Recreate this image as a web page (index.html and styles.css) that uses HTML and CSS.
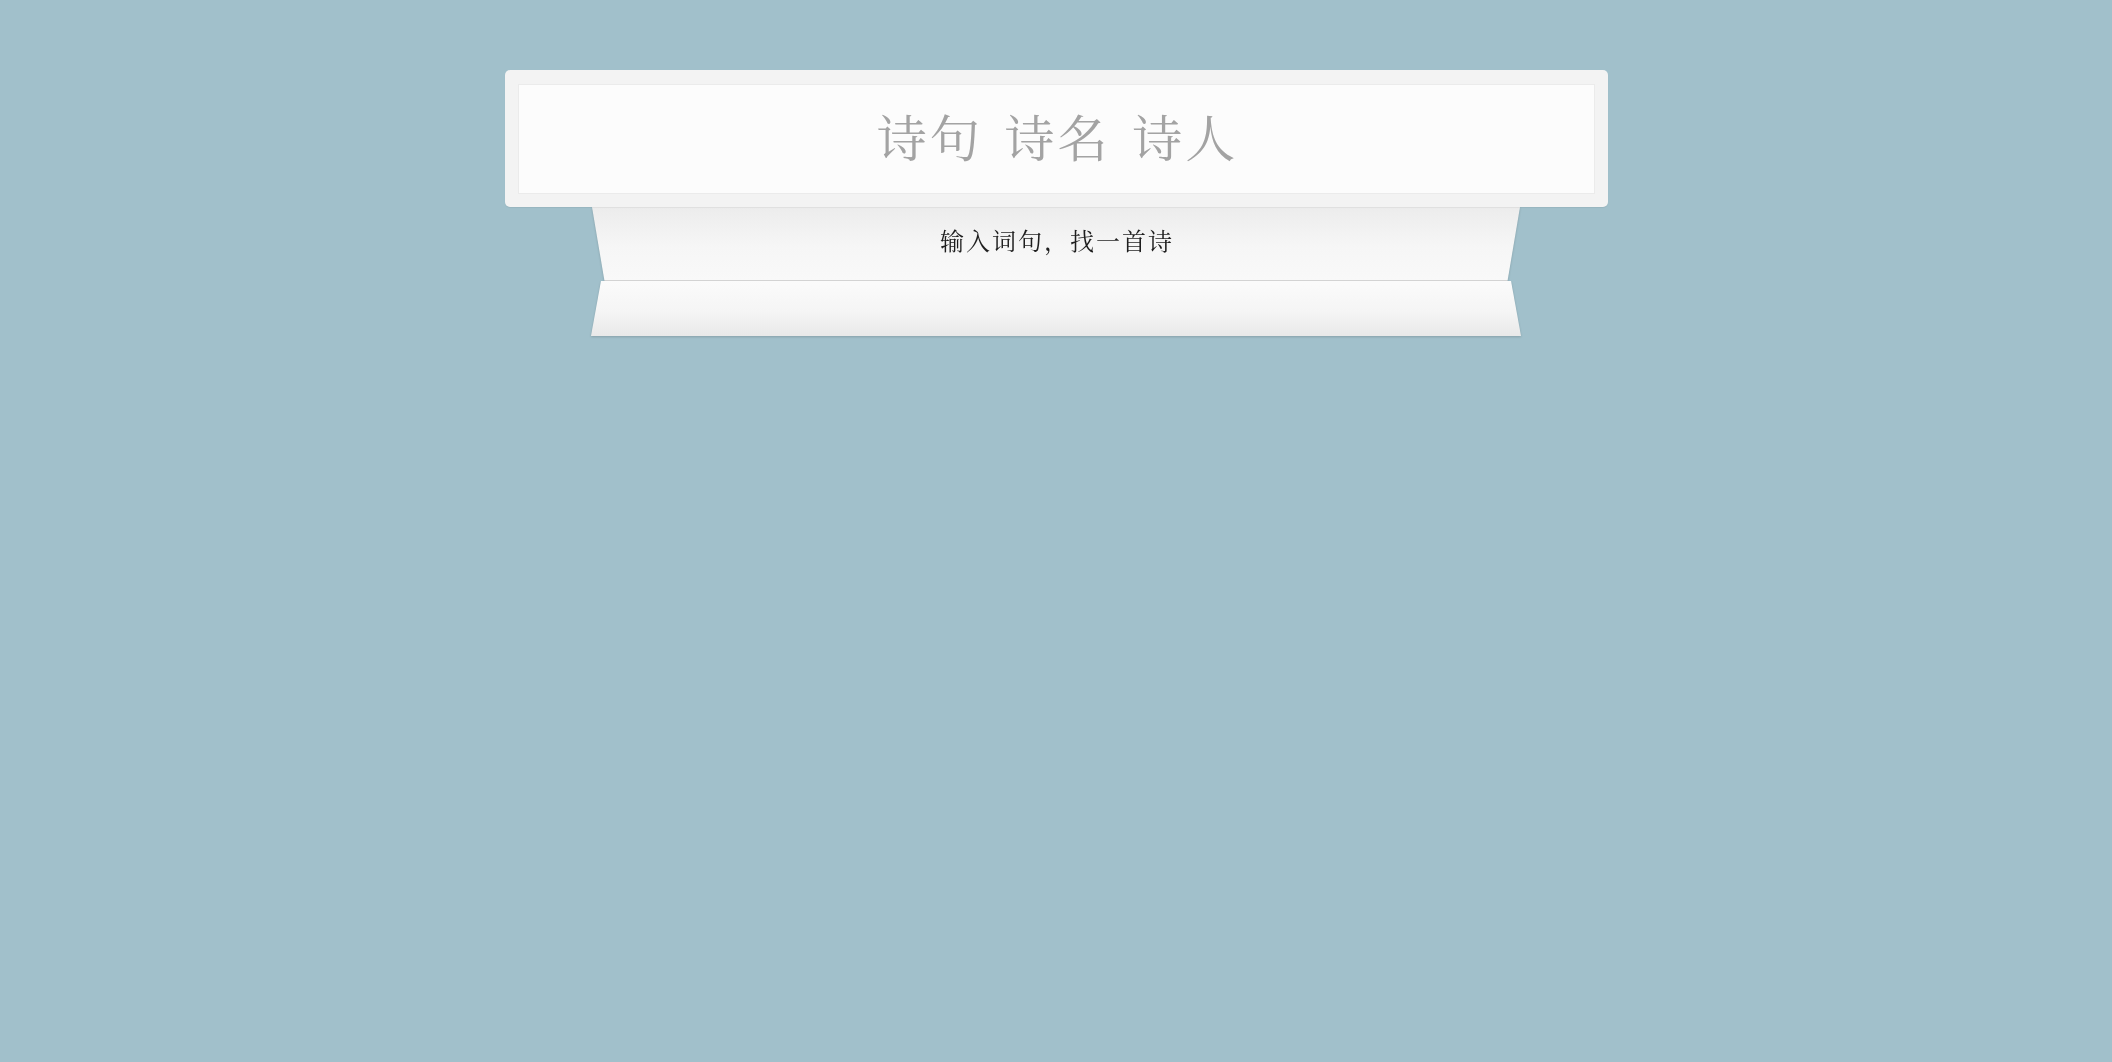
FILE: index.html
```html
<!DOCTYPE html>
<html lang="zh-CN">
<head>
<meta charset="utf-8">
<title>诗句 诗名 诗人</title>
<link rel="stylesheet" href="styles.css">
</head>
<body>
  <div class="wrap">
    <header class="card">
      <div class="inner">
        <h1 class="title">诗句 诗名 诗人</h1>
      </div>
    </header>
    <div class="tabs">
      <div class="tab-top">
        <p class="subtitle">输入词句，找一首诗</p>
      </div>
      <div class="tab-bottom"></div>
    </div>
  </div>
</body>
</html>
```

FILE: styles.css
```css
html, body {
  margin: 0;
  padding: 0;
}
body {
  background: #a1c0cb;
  min-height: 1062px;
  font-family: "KaiTi", "STKaiti", "AR PL UKai CN", "Noto Serif CJK SC", "Noto Sans CJK SC", sans-serif;
}
.wrap {
  width: 1103px;
  margin: 70px auto 0;
}
.card {
  background: #f3f3f3;
  border-radius: 5px;
  padding: 14px 13px 13px;
  box-shadow: 0 1px 1px rgba(0, 0, 0, 0.06);
  position: relative;
  z-index: 2;
}
.inner {
  height: 110px;
  box-sizing: border-box;
  background: #fcfcfc;
  border: 1px solid #ebebeb;
  display: flex;
  align-items: center;
  justify-content: center;
}
.title {
  margin: 0;
  font-size: 50px;
  font-weight: 400;
  line-height: 1;
  color: #a3a3a3;
  letter-spacing: 3px;
  word-spacing: 6px;
  padding-left: 3px;
  padding-bottom: 9px;
}
.tabs {
  display: flex;
  flex-direction: column;
  align-items: center;
  filter: drop-shadow(0 1px 1px rgba(0, 0, 0, 0.16));
}
.tab-top {
  width: 928px;
  height: 74px;
  box-sizing: border-box;
  background: linear-gradient(to bottom, #ececec 0%, #f6f6f6 55%, #f9f9f9 100%);
  border-bottom: 1px solid #d3d3d3;
  clip-path: polygon(0 0, 100% 0, calc(100% - 12.5px) 100%, 12.5px 100%);
  display: flex;
  align-items: center;
  justify-content: center;
}
.subtitle {
  margin: 0;
  font-size: 24px;
  line-height: 1;
  color: #1e1e1e;
  letter-spacing: 2px;
  padding-left: 2px;
  padding-bottom: 8px;
}
.tab-bottom {
  width: 930px;
  height: 55px;
  background: linear-gradient(to bottom, #fbfbfb 0%, #f5f5f5 55%, #e9e9e9 100%);
  clip-path: polygon(10px 0, calc(100% - 10px) 0, 100% 100%, 0 100%);
}
```
